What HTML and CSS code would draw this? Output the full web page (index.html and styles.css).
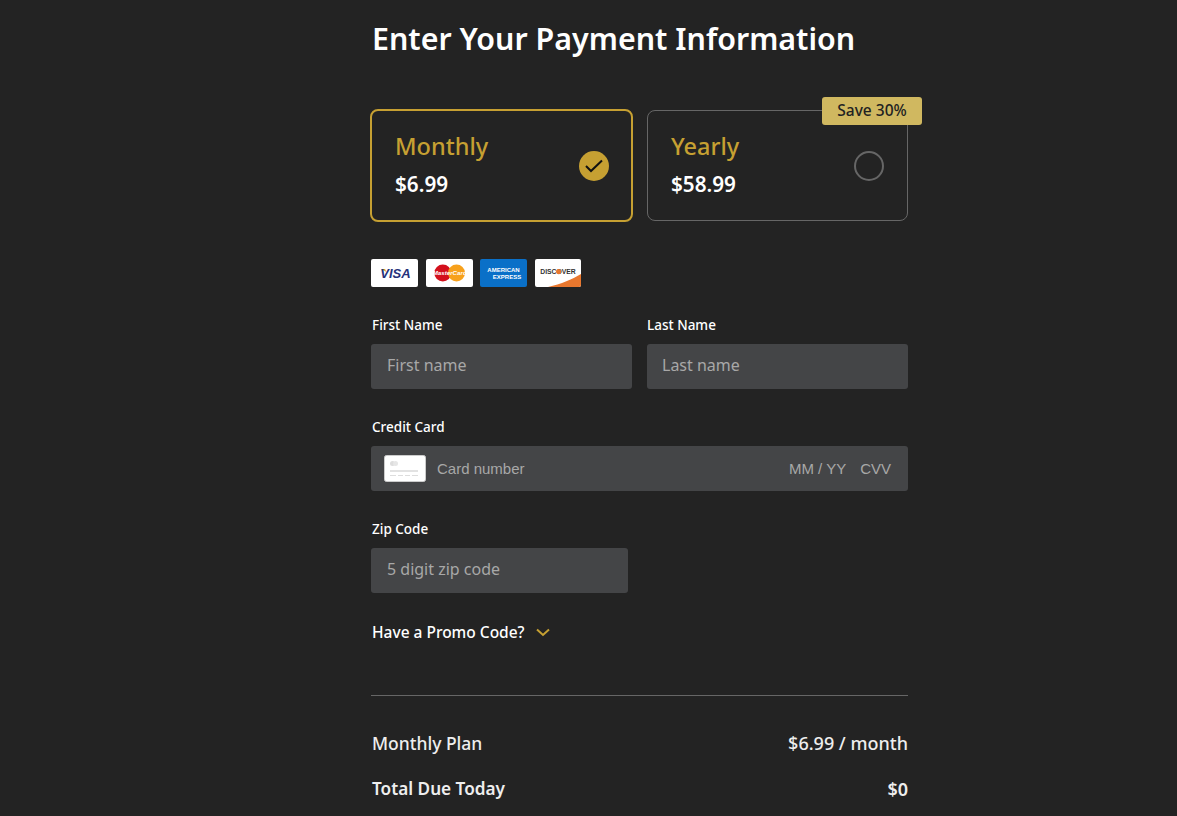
FILE: index.html
```html
<!DOCTYPE html>
<html lang="en">
<head>
    <meta charset="UTF-8">
    <title>Enter Your Payment Information</title>
    <link rel="stylesheet" href="styles.css">
</head>
<body>
    <div class="container">
        <h1>Enter Your Payment Information</h1>

        <div class="plans">
            <div class="plan selected">
                <div class="plan-info">
                    <div class="plan-name">Monthly</div>
                    <div class="plan-price">$6.99</div>
                </div>
                <span class="plan-check">
                    <svg width="18" height="14" viewBox="0 0 18 14"><path d="M1 7l5 5L17 1.5" fill="none" stroke="#111" stroke-width="2"/></svg>
                </span>
            </div>
            <div class="plan">
                <div class="plan-info">
                    <div class="plan-name">Yearly</div>
                    <div class="plan-price">$58.99</div>
                </div>
                <span class="plan-radio"></span>
                <span class="badge">Save 30%</span>
            </div>
        </div>

        <!-- Accepted cards -->
        <div class="cards">
            <div class="card-logo">
                <svg width="47" height="28" viewBox="0 0 47 28">
                    <path d="M10 10h4l1.5 3z" fill="#e0a030"/>
                    <text x="24.5" y="19" text-anchor="middle" class="visa-text">VISA</text>
                </svg>
            </div>
            <div class="card-logo">
                <svg width="47" height="28" viewBox="0 0 47 28">
                    <circle cx="16.8" cy="14" r="8.5" fill="#d3101c"/>
                    <circle cx="30.5" cy="14" r="8.5" fill="#f7a11c"/>
                    <text x="23.7" y="16" text-anchor="middle" class="mc-text">MasterCard</text>
                </svg>
            </div>
            <div class="card-logo amex">
                <svg width="47" height="28" viewBox="0 0 47 28">
                    <text x="23.5" y="13" text-anchor="middle" class="amex-text">AMERICAN</text>
                    <text x="27" y="20" text-anchor="middle" class="amex-text">EXPRESS</text>
                </svg>
            </div>
            <div class="card-logo discover">
                <svg width="46" height="28" viewBox="0 0 46 28">
                    <path d="M13 28C26 25 38 20 46 15v13z" fill="#e8772e"/>
                    <text x="23" y="15" text-anchor="middle" class="disc-text">DISCOVER</text>
                    <circle cx="23.7" cy="12.6" r="2.6" fill="#e8772e"/>
                </svg>
            </div>
        </div>

        <div class="row">
            <div class="field half">
                <label>First Name</label>
                <input type="text" placeholder="First name">
            </div>
            <div class="field half">
                <label>Last Name</label>
                <input type="text" placeholder="Last name">
            </div>
        </div>

        <div class="field">
            <label>Credit Card</label>
            <div class="card-input">
                <svg class="card-icon" width="42" height="27" viewBox="0 0 42 27">
                    <rect x="0.5" y="0.5" width="41" height="26" rx="2" fill="#fff" stroke="#ccc"/>
                    <circle cx="8.5" cy="8.5" r="2.5" fill="#ddd"/>
                    <circle cx="11.5" cy="8.5" r="2.5" fill="#e6e6e6"/>
                    <rect x="6" y="15" width="28" height="2" fill="#e2e2e2"/>
                    <path d="M6 20.5h6M14 20.5h5M21 20.5h5M28 20.5h6" stroke="#ddd"/>
                </svg>
                <span class="card-number">Card number</span>
                <span class="card-expiry">MM / YY</span>
                <span class="card-cvv">CVV</span>
            </div>
        </div>

        <div class="field zip">
            <label>Zip Code</label>
            <input type="text" placeholder="5 digit zip code">
        </div>

        <div class="promo">
            Have a Promo Code?
            <svg width="14" height="9" viewBox="0 0 14 9"><path d="M1 1.5l6 5.5 6-5.5" fill="none" stroke="#c6a032" stroke-width="2"/></svg>
        </div>

        <hr>

        <div class="summary">
            <div class="summary-row"><span>Monthly Plan</span><span class="summary-value">$6.99 / month</span></div>
            <div class="summary-row total"><span>Total Due Today</span><span class="summary-value">$0</span></div>
        </div>
    </div>
</body>
</html>
```

FILE: styles.css
```css
html, body {
    height: 100%;
    overflow: hidden;
}
body {
    font-family: "Noto Sans", Arial, sans-serif;
    background-color: #232323;
    color: #ffffff;
    margin: 0;
    padding: 0;
}
.container {
    width: 537px;
    margin-left: 371px;
}
h1 {
    font-size: 30.4px;
    font-weight: 600;
    line-height: 40px;
    margin: 0;
    padding: 19px 0 0 1px;
    white-space: nowrap;
}
.plans {
    display: flex;
    gap: 14px;
    margin-top: 51px;
}
.plan {
    position: relative;
    flex: 0 0 261px;
    height: 111px;
    box-sizing: border-box;
    border: 1px solid #666666;
    border-radius: 8px;
    padding: 0 23px;
    display: flex;
    align-items: center;
    justify-content: space-between;
}
.plan.selected {
    flex-basis: 263px;
    border: 2px solid #c6a032;
    margin: -1px 0 -1px -1px;
    height: 113px;
    padding-right: 22px;
}
.plan-info {
    padding-bottom: 3px;
}
.plan-name {
    color: #c6a032;
    font-size: 23.5px;
    font-weight: 500;
    line-height: 30px;
}
.plan-price {
    font-size: 20.7px;
    font-weight: 600;
    line-height: 26px;
    margin-top: 10px;
}
.plan-check {
    width: 30px;
    height: 30px;
    border-radius: 50%;
    background-color: #c6a032;
    display: flex;
    align-items: center;
    justify-content: center;
}
.plan-radio {
    width: 30px;
    height: 30px;
    box-sizing: border-box;
    border: 2px solid #666666;
    border-radius: 50%;
}
.badge {
    position: absolute;
    top: -14px;
    right: -15px;
    width: 100px;
    height: 28px;
    background-color: #d0b860;
    color: #222222;
    border-radius: 3px;
    font-size: 15.5px;
    font-weight: 500;
    line-height: 27px;
    text-align: center;
}
.cards {
    display: flex;
    gap: 8px;
    margin-top: 38px;
}
.card-logo {
    width: 47px;
    height: 28px;
    background-color: #ffffff;
    border-radius: 2px;
    overflow: hidden;
}
.card-logo svg {
    display: block;
}
.card-logo.amex {
    background-color: #0a70c8;
    margin-left: -1px;
}
.card-logo.discover {
    width: 46px;
}
.visa-text {
    font-family: "Liberation Sans", sans-serif;
    font-size: 13px;
    font-weight: bold;
    font-style: italic;
    fill: #26327a;
}
.mc-text {
    font-family: "Liberation Sans", sans-serif;
    font-size: 6.2px;
    font-weight: bold;
    font-style: italic;
    fill: #ffffff;
}
.amex-text {
    font-family: "Liberation Sans", sans-serif;
    font-size: 6px;
    font-weight: bold;
    fill: #ffffff;
}
.disc-text {
    font-family: "Liberation Sans", sans-serif;
    font-size: 6.8px;
    font-weight: bold;
    fill: #333333;
}
.row {
    display: flex;
    gap: 15px;
    margin-top: 28px;
}
.field {
    margin-bottom: 28px;
}
.half {
    flex: 1;
    min-width: 0;
}
.field label {
    display: block;
    font-size: 13.5px;
    font-weight: 500;
    line-height: 20px;
    margin-bottom: 9px;
    padding-left: 1px;
}
.field input {
    display: block;
    width: 100%;
    height: 45px;
    box-sizing: border-box;
    background-color: #444547;
    border: none;
    border-radius: 3px;
    color: #ffffff;
    font-family: "Noto Sans", Arial, sans-serif;
    font-size: 16px;
    padding: 0 16px 3px;
    outline: none;
}
.field input::placeholder {
    color: #a8a8a8;
    opacity: 1;
}
.half + .half label {
    padding-left: 0;
}
.half + .half input {
    padding-left: 15px;
}
.zip {
    width: 257px;
    margin-bottom: 0;
}
.card-input {
    height: 45px;
    background-color: #444547;
    border-radius: 3px;
    display: flex;
    align-items: center;
    padding: 0 17px 0 13px;
    color: #a8a8a8;
    font-family: "Liberation Sans", Arial, sans-serif;
    font-size: 15px;
}
.card-number {
    margin-left: 11px;
    flex: 1;
}
.card-cvv {
    margin-left: 14px;
}
.promo {
    display: flex;
    align-items: center;
    gap: 11px;
    font-size: 15.5px;
    font-weight: 500;
    line-height: 22px;
    margin-top: 28px;
    padding-left: 1px;
}
hr {
    border: none;
    border-top: 1px solid #666666;
    margin: 52px 0 0;
}
.summary {
    margin-top: 35px;
}
.summary-row {
    display: flex;
    justify-content: space-between;
    font-size: 17.5px;
    font-weight: 500;
    line-height: 24px;
    color: #eeeeee;
    padding-left: 1px;
}
.summary-value {
    font-size: 18px;
}
.summary-row.total {
    margin-top: 22px;
    font-size: 17.2px;
    font-weight: 600;
}
```
